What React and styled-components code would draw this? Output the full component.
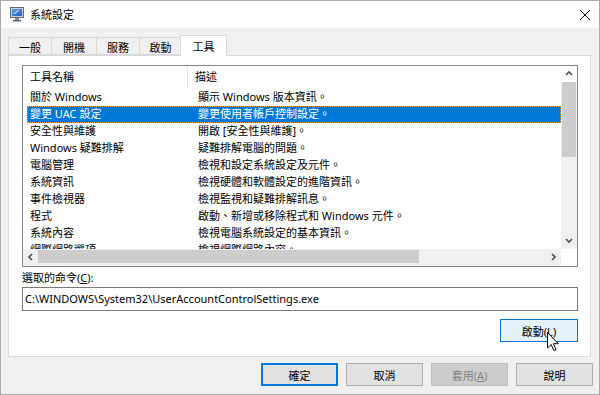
import React from 'react';
import styled, { createGlobalStyle } from 'styled-components';

const GlobalStyle = createGlobalStyle`
  html, body { margin: 0; padding: 0; background: #fff; }
  body {
    font-family: "Noto Sans", "Noto Sans CJK TC", sans-serif;
    font-size: 11px;
    color: #000;
  }
  * { box-sizing: border-box; }
`;

const tools = [
  ['關於 Windows', '顯示 Windows 版本資訊。'],
  ['變更 UAC 設定', '變更使用者帳戶控制設定。'],
  ['安全性與維護', '開啟 [安全性與維護]。'],
  ['Windows 疑難排解', '疑難排解電腦的問題。'],
  ['電腦管理', '檢視和設定系統設定及元件。'],
  ['系統資訊', '檢視硬體和軟體設定的進階資訊。'],
  ['事件檢視器', '檢視監視和疑難排解訊息。'],
  ['程式', '啟動、新增或移除程式和 Windows 元件。'],
  ['系統內容', '檢視電腦系統設定的基本資訊。'],
  ['網際網路選項', '檢視網際網路內容。'],
];

const tabs = [
  { label: '一般', w: 43 },
  { label: '開機', w: 45 },
  { label: '服務', w: 43 },
  { label: '啟動', w: 42 },
  { label: '工具', w: 47, active: true },
];

const Window = styled.div`
  width: 600px;
  height: 395px;
  border: 1px solid #a9a9a9;
  background: #f0f0f0;
  display: flex;
  flex-direction: column;
`;

const TitleBar = styled.div`
  height: 27px;
  background: #fff;
  display: flex;
  align-items: center;
  padding: 0 9px 0 9px;
  gap: 6px;
`;

const Title = styled.span`
  font-size: 11px;
  margin-top: -1px;
`;

const CloseX = styled.svg`
  margin-left: auto;
`;

const Client = styled.div`
  flex: 1;
  display: flex;
  flex-direction: column;
  padding: 7px 6px 0 7px;
`;

const TabStrip = styled.div`
  display: flex;
  align-items: flex-end;
  height: 20px;
  position: relative;
  z-index: 1;
`;

const Tab = styled.div`
  width: ${p => p.$w}px;
  height: ${p => (p.$active ? 21 : 18)}px;
  margin-bottom: ${p => (p.$active ? -1 : 0)}px;
  margin-left: ${p => (p.$active ? -1 : 0)}px;
  background: ${p => (p.$active ? '#fff' : '#f0f0f0')};
  border: 1px solid #d9d9d9;
  border-bottom: ${p => (p.$active ? 'none' : '1px solid #d9d9d9')};
  border-right: ${p => (p.$active ? '1px solid #d9d9d9' : 'none')};
  display: flex;
  align-items: center;
  justify-content: center;
  padding-top: ${p => (p.$active ? 0 : 1)}px;
  font-size: 11px;
`;

const Panel = styled.div`
  height: 302px;
  margin-right: 2px;
  background: #fff;
  border: 1px solid #d9d9d9;
  padding: 9px 12px 0 13px;
  display: flex;
  flex-direction: column;
`;

const ListView = styled.div`
  height: 202px;
  border: 1px solid #828790;
  background: #fff;
  display: grid;
  grid-template-columns: 1fr 16px;
  grid-template-rows: 1fr 17px;
`;

const ListMain = styled.div`
  display: flex;
  flex-direction: column;
  overflow: hidden;
`;

const Header = styled.div`
  display: grid;
  grid-template-columns: 165px 1fr;
  height: 23px;
  flex: none;
`;

const HeaderCell = styled.div`
  padding-left: 7px;
  line-height: 22px;
  border-right: ${p => (p.$sep ? '1px solid #e5e5e5' : 'none')};
`;

const Body = styled.div`
  flex: 1;
  overflow: hidden;
  padding-left: 4px;
`;

const Row = styled.div`
  display: grid;
  grid-template-columns: 168px 1fr;
  height: 17px;
  line-height: 16px;
  white-space: nowrap;
  background: ${p => (p.$selected ? '#0078d7' : 'transparent')};
  color: ${p => (p.$selected ? '#fff' : '#000')};
  outline: ${p => (p.$selected ? '1px dotted #f0a040' : 'none')};
  outline-offset: -1px;
`;

const Cell = styled.div`
  padding-left: 3px;
  overflow: hidden;
`;

const VScroll = styled.div`
  background: #f0f0f0;
  display: flex;
  flex-direction: column;
`;

const HScroll = styled.div`
  background: #f0f0f0;
  display: flex;
`;

const Corner = styled.div`
  background: #fff;
`;

const ArrowBox = styled.div`
  flex: none;
  width: ${p => p.$w || 16}px;
  height: ${p => p.$h || 16}px;
  background: ${p => p.$bg || 'transparent'};
  display: flex;
  align-items: center;
  justify-content: center;
`;

const Thumb = styled.div`
  flex: none;
  background: #cdcdcd;
  width: ${p => (p.$vertical ? 'auto' : `${p.$size}px`)};
  height: ${p => (p.$vertical ? `${p.$size}px` : 'auto')};
  margin: ${p => (p.$vertical ? '0 1px' : '1px 0 3px')};
`;

const Track = styled.div`
  flex: 1;
`;

const FieldLabel = styled.div`
  margin-top: 4px;
  line-height: 14px;
  padding-left: 0;
`;

const TextField = styled.div`
  margin-top: 2px;
  height: 24px;
  border: 1px solid #7a7a7a;
  padding-left: 2px;
  line-height: 21px;
  background: #fff;
  white-space: nowrap;
`;

const ButtonRow = styled.div`
  display: flex;
  justify-content: flex-end;
  gap: ${p => p.$gap || 8}px;
  margin-top: ${p => p.$top || 0}px;
`;

const Button = styled.button`
  position: relative;
  width: ${p => p.$w || 77}px;
  height: 23px;
  padding: 0;
  font: inherit;
  font-size: 11px;
  color: #000;
  background: #e1e1e1;
  border: 1px solid #adadad;
  ${p => p.$primary && 'border: 2px solid #0078d7;'}
  ${p => p.$hot && 'background: #e5f1fb; border: 1px solid #0078d7;'}
  &:disabled {
    background: #cccccc;
    border-color: #bfbfbf;
    color: #838383;
  }
`;

const Cursor = styled.svg`
  position: absolute;
  left: 46px;
  top: 12px;
`;

function Chevron({ dir }) {
  const pts = {
    up: '1,5 4,2 7,5',
    down: '1,2 4,5 7,2',
    left: '5,1 2,4 5,7',
    right: '2,1 5,4 2,7',
  }[dir];
  return (
    <svg width="8" height="8" viewBox="0 0 8 8">
      <polyline points={pts} fill="none" stroke="#505050" strokeWidth="1.6" />
    </svg>
  );
}

function AppIcon() {
  return (
    <svg width="14" height="15" viewBox="0 0 14 15">
      <defs>
        <linearGradient id="scr" x1="0" y1="0" x2="1" y2="1">
          <stop offset="0" stopColor="#5aa0f0" />
          <stop offset="1" stopColor="#1b5fc4" />
        </linearGradient>
      </defs>
      <rect x="0.5" y="0.5" width="13" height="10" fill="#c8d0da" stroke="#5c6b7d" />
      <rect x="2" y="2" width="10" height="7" fill="url(#scr)" />
      <path d="M4 7 L9 3" stroke="#fff" strokeWidth="1" />
      <rect x="5" y="11" width="4" height="2" fill="#7d8894" />
      <rect x="3" y="13" width="8" height="1.5" fill="#5c6b7d" />
    </svg>
  );
}

export default function App() {
  return (
    <>
      <GlobalStyle />
      <Window>
        <TitleBar>
          <AppIcon />
          <Title>系統設定</Title>
          <CloseX width="10" height="10" viewBox="0 0 10 10">
            <path d="M0 0 L10 10 M10 0 L0 10" stroke="#111" strokeWidth="1" />
          </CloseX>
        </TitleBar>
        <Client>
          <TabStrip>
            {tabs.map(t => (
              <Tab key={t.label} $w={t.w} $active={t.active}>{t.label}</Tab>
            ))}
          </TabStrip>
          <Panel>
            <ListView>
              <ListMain>
                <Header>
                  <HeaderCell $sep>工具名稱</HeaderCell>
                  <HeaderCell>描述</HeaderCell>
                </Header>
                <Body>
                  {tools.map(([name, desc], i) => (
                    <Row key={name} $selected={i === 1}>
                      <Cell>{name}</Cell>
                      <Cell>{desc}</Cell>
                    </Row>
                  ))}
                </Body>
              </ListMain>
              <VScroll>
                <ArrowBox $bg="#fff"><Chevron dir="up" /></ArrowBox>
                <Thumb $vertical $size={75} />
                <Track />
                <ArrowBox $h={17}><Chevron dir="down" /></ArrowBox>
              </VScroll>
              <HScroll>
                <ArrowBox $w={15}><Chevron dir="left" /></ArrowBox>
                <Thumb $size={381} />
                <Track />
                <ArrowBox $w={15}><Chevron dir="right" /></ArrowBox>
              </HScroll>
              <Corner />
            </ListView>
            <FieldLabel>選取的命令(<u>C</u>):</FieldLabel>
            <TextField>C:\WINDOWS\System32\UserAccountControlSettings.exe</TextField>
            <ButtonRow $top={8}>
              <Button $hot $w={78}>
                啟動(<u>L</u>)
                <Cursor width="12" height="20" viewBox="0 0 12 20">
                  <path
                    d="M0.5 0.5 L0.5 16 L4.2 12.5 L6.8 18.6 L9 17.7 L6.5 11.7 L11.3 11.7 Z"
                    fill="#fff"
                    stroke="#000"
                    strokeWidth="1"
                    strokeLinejoin="round"
                  />
                </Cursor>
              </Button>
            </ButtonRow>
          </Panel>
          <ButtonRow $top={6} $gap={8}>
            <Button $primary>確定</Button>
            <Button>取消</Button>
            <Button disabled>套用(<u>A</u>)</Button>
            <Button>說明</Button>
          </ButtonRow>
        </Client>
      </Window>
    </>
  );
}
